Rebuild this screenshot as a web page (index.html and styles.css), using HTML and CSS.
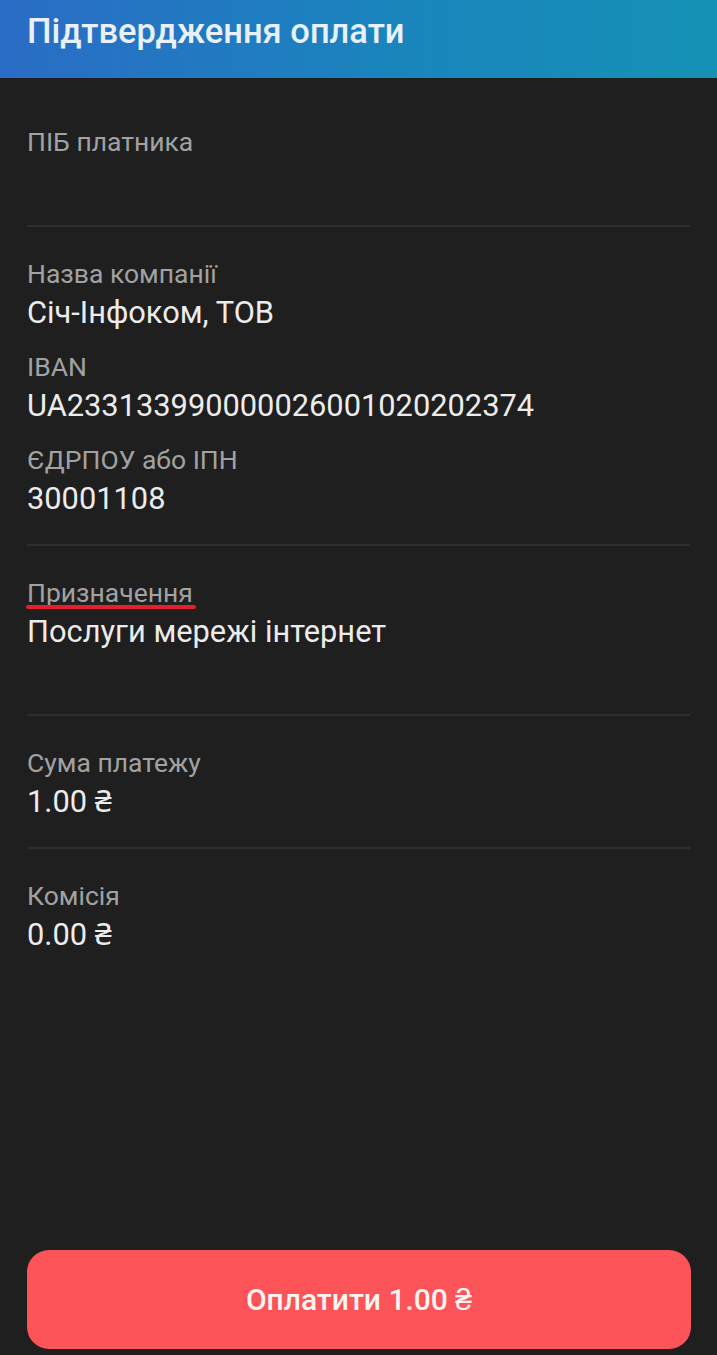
FILE: index.html
```html
<!DOCTYPE html>
<html>
<head>
<meta charset="UTF-8">
<title>Підтвердження оплати</title>
<link rel="stylesheet" href="styles.css">
</head>
<body>
	<div class="page">
		<div class="topbar">Підтвердження оплати</div>

		<div class="block first">
			<div class="label">ПІБ платника</div>
			<div class="value empty">&nbsp;</div>
		</div>

		<div class="block">
			<div class="label">Назва компанії</div>
			<div class="value">Січ-Інфоком, ТОВ</div>
			<div class="label next">IBAN</div>
			<div class="value">UA233133990000026001020202374</div>
			<div class="label next">ЄДРПОУ або ІПН</div>
			<div class="value">30001108</div>
		</div>

		<div class="block">
			<div class="label"><span class="mark">Призначення</span></div>
			<div class="value">Послуги мережі інтернет</div>
			<div class="value extra">&nbsp;</div>
		</div>

		<div class="block">
			<div class="label">Сума платежу</div>
			<div class="value">1.00 ₴</div>
		</div>

		<div class="block last">
			<div class="label">Комісія</div>
			<div class="value">0.00 ₴</div>
		</div>

		<div class="bottom">
			<button class="paybtn">Оплатити 1.00 ₴</button>
		</div>
	</div>
</body>
</html>
```

FILE: styles.css
```css
/* 기본 */
html, body{margin:0; padding:0; background-color:#1f1f1f;}
body{font-family:Roboto, "Noto Sans", sans-serif; color:#ececec;}

.page{display:flex; flex-direction:column; min-height:100vh;}

/* 상단 바 */
.topbar{height:78px; box-sizing:border-box; padding:11px 27px 0 27px;
	background:linear-gradient(90deg, #2a6cc6 0%, #1a85bd 55%, #1591b5 100%);
	color:#e8f1f8; font-size:34.5px; font-weight:500; line-height:40px;}

/* 항목 블록 */
.block{margin:0 27px; padding:32px 0 25px 0; border-bottom:2px solid #2f2f2f;}
.block.first{padding-top:49px; padding-bottom:24px;}
.block.last{border-bottom:none;}

.label{font-size:26.5px; line-height:30px; color:#a2a2a2;}
.label.next{margin-top:19px;}
.value{font-size:30.8px; line-height:40px; margin-top:4px; color:#ececec;}
.value.extra{height:37px; margin-top:0;}

/* 빨간 밑줄 */
.mark{position:relative; display:inline-block;}
.mark::after{content:""; position:absolute; left:-1px; right:-3px; bottom:-1px; height:4px;
	border-radius:2px; background-color:#e3202b;}

/* 결제 버튼 */
.bottom{margin-top:auto; padding:0 26px 6px 27px;}
.paybtn{display:block; width:100%; height:99px; border:none; border-radius:22px;
	background-color:#fc5458; color:#fff4f2; font-family:Roboto, sans-serif;
	font-size:30px; font-weight:500;}
```
